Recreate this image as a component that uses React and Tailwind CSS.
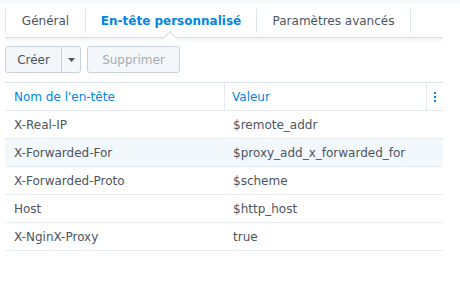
const ROWS = [
  { name: "X-Real-IP", value: "$remote_addr" },
  { name: "X-Forwarded-For", value: "$proxy_add_x_forwarded_for", hover: true },
  { name: "X-Forwarded-Proto", value: "$scheme" },
  { name: "Host", value: "$http_host" },
  { name: "X-NginX-Proxy", value: "true" },
];

const TABS = [
  { label: "Général", width: "w-[81px]" },
  { label: "En-tête personnalisé", width: "w-[171px]", active: true },
  { label: "Paramètres avancés", width: "w-[154px]" },
];

function Caret() {
  return (
    <svg viewBox="0 0 7 4" className="h-[4px] w-[7px]" aria-hidden="true">
      <path d="M0 0h7L3.5 4z" fill="#4b5561" />
    </svg>
  );
}

function MoreIcon() {
  return (
    <svg viewBox="0 0 2 10" className="h-[10px] w-[2px]" aria-hidden="true">
      <rect x="0" y="0" width="2" height="2" fill="#0086e5" />
      <rect x="0" y="4" width="2" height="2" fill="#0086e5" />
      <rect x="0" y="8" width="2" height="2" fill="#0086e5" />
    </svg>
  );
}

export default function App() {
  return (
    <div className="h-[302px] w-[460px] overflow-hidden bg-white text-[12px] text-[#4b5561] [font-family:'DejaVu_Sans',Verdana,sans-serif]">
      <div className="h-[5px] bg-gradient-to-b from-[#f3f6fa] to-white" />

      {/* tabs */}
      <div className="relative ml-[5px] w-[438px] pt-[4px]">
        <div className="flex h-[29px] border-b border-[#d7dde3]">
          {TABS.map((tab) => (
            <div
              key={tab.label}
              className={`${tab.width} relative flex h-[24px] items-center justify-center border-r border-[#dde3e9] first:border-l ${
                tab.active ? "font-bold text-[#0086e5]" : ""
              }`}
            >
              {tab.label}
            </div>
          ))}
        </div>
        <div className="absolute left-[160px] top-[28px] h-[10px] w-[10px] rotate-45 border-l border-t border-[#d7dde3] bg-white" />
        <div className="h-[4px] bg-gradient-to-b from-[#eef1f4] to-white" />
      </div>

      {/* toolbar */}
      <div className="ml-[5px] mt-[4px] flex gap-[6px]">
        <div className="flex h-[27px] rounded-[3px] border border-[#c9d3dd] bg-[#f4f7fa]">
          <button type="button" className="w-[56px] border-r border-[#c9d3dd] text-[#4b5561]">
            Créer
          </button>
          <span className="flex w-[18px] items-center justify-center">
            <Caret />
          </span>
        </div>
        <button
          type="button"
          className="h-[27px] w-[93px] rounded-[3px] border border-[#c9d3dd] bg-[#f4f7fa] text-[#a5adb5]"
        >
          Supprimer
        </button>
      </div>

      {/* table */}
      <div className="ml-[5px] mt-[9px] w-[438px] border-t border-[#dbe3ec]">
        <div className="flex h-[28px] items-center border-b border-[#e6eaee] text-[#0086e5]">
          <div className="flex h-full w-[220px] items-center border-r border-[#e6eaee] pl-[9px]">Nom de l'en-tête</div>
          <div className="flex h-full w-[202px] items-center border-r border-[#e6eaee] pl-[7px]">Valeur</div>
          <div className="flex h-full flex-1 items-center justify-center">
            <MoreIcon />
          </div>
        </div>
        {ROWS.map((row) => (
          <div
            key={row.name}
            className={`flex h-[28px] items-center border-b border-[#e9ecef] ${row.hover ? "bg-[#f3f8fd]" : ""}`}
          >
            <div className="w-[220px] pl-[9px]">{row.name}</div>
            <div className="pl-[8px]">{row.value}</div>
          </div>
        ))}
      </div>
    </div>
  );
}
